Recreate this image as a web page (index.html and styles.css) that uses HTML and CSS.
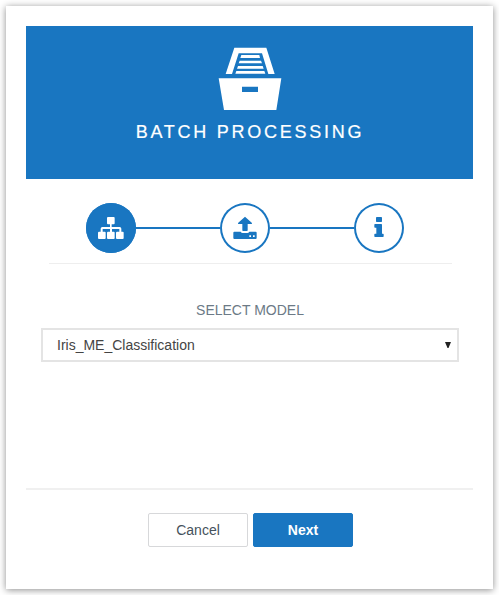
FILE: index.html
```html
<!DOCTYPE html>
<html lang="en">
<head>
<meta charset="utf-8">
<title>Batch Processing</title>
<link rel="stylesheet" href="styles.css">
</head>
<body>
<main class="dialog">
  <header class="banner">
    <svg class="banner-icon" viewBox="39 36 192 192" fill="#fff">
      <path d="M62 117 88 38H184L209 117H190L171 55H101L81 117Z"/>
      <path d="M109 60H163L165 69H106ZM104 77H168L171 85H101ZM99 93H173L176 101H96ZM94 108H178L181 116H91Z"/>
      <path fill-rule="evenodd" d="M41 130H229L214 225H57ZM111 155V171H159V155Z"/>
    </svg>
    <h1 class="title">BATCH PROCESSING</h1>
  </header>
  <nav class="steps">
    <div class="step active">
      <svg viewBox="33 24 150 150" fill="currentColor">
        <rect x="96" y="66" width="23" height="22" rx="3"/>
        <path d="M105 86h5v10h24q5 0 5 5v10h-6v-9h-22v9h-6v-9H83v9h-6v-10q0-5 5-5h23Z"/>
        <rect x="69" y="110" width="23" height="22" rx="3"/>
        <rect x="96" y="110" width="23" height="22" rx="3"/>
        <rect x="123" y="110" width="23" height="22" rx="3"/>
      </svg>
    </div>
    <div class="link"></div>
    <div class="step">
      <svg viewBox="45 24 150 150" fill="currentColor">
        <path d="M120 65 141 84Q142 87 139 87H128V106Q128 108 126 108H114Q112 108 112 106V87H101Q98 87 99 84Z"/>
        <path fill-rule="evenodd" d="M88 110H107Q109 114 113 114H127Q131 114 133 110H152Q155 110 155 113V129Q155 132 152 132H88Q85 132 85 129V113Q85 110 88 110ZM133 121V126H138V121ZM144 121V126H149V121Z"/>
      </svg>
    </div>
    <div class="link"></div>
    <div class="step">
      <svg viewBox="42 24 150 150" fill="currentColor">
        <rect x="108" y="66" width="18" height="15" rx="2"/>
        <path d="M105 87H124Q126 87 126 90V116H129Q131 116 131 118V124Q131 126 129 126H105Q103 126 103 124V118Q103 116 105 116H109V98H105Q103 98 103 96V89Q103 87 105 87Z"/>
      </svg>
    </div>
  </nav>
  <section class="form">
    <div class="label">SELECT MODEL</div>
    <div class="select">
      <span>Iris_ME_Classification</span>
      <svg class="arrow" viewBox="0 0 6 6"><path d="M0 0H6L3.5 6H2.5Z" fill="#222"/></svg>
    </div>
  </section>
  <footer class="actions">
    <button class="btn cancel">Cancel</button>
    <button class="btn next">Next</button>
  </footer>
</main>
</body>
</html>
```
FILE: styles.css
```css
* { box-sizing: border-box; }

body {
  margin: 0;
  padding: 6px;
  background: #fff;
  font-family: "Liberation Sans", Arial, sans-serif;
  font-size: 14px;
}

.dialog {
  display: flex;
  flex-direction: column;
  width: 487px;
  height: 583px;
  padding: 20px;
  background: #fff;
  box-shadow: 0 1px 7px rgba(0, 0, 0, 0.45);
}

.banner {
  display: flex;
  flex-direction: column;
  align-items: center;
  height: 153px;
  padding-top: 21px;
  background: #1976c1;
  color: #fff;
}

.banner-icon { width: 64px; height: 64px; }

.title {
  margin: 9px 0 0;
  padding-left: 1px;
  font-size: 18px;
  font-weight: 400;
  line-height: 24px;
  letter-spacing: 2.75px;
  -webkit-text-stroke: 0.2px #fff;
}

.steps {
  display: flex;
  align-items: center;
  height: 85px;
  margin: 0 21px 0 23px;
  padding: 24px 48px 10px 37px;
  border-bottom: 1px solid #eee;
}

.step {
  flex: none;
  width: 50px;
  height: 50px;
  border-radius: 50%;
  background: #fff;
  box-shadow: inset 0 0 0 2px #1976c1;
  color: #1976c1;
}

.step.active { background: #1976c1; color: #fff; }
.step svg { display: block; width: 50px; height: 50px; }
.link { flex: 1; height: 2px; background: #1976c1; }

.form {
  height: 224px;
  padding: 36px 14px 0 15px;
}

.label {
  height: 28px;
  line-height: 20px;
  color: #6c7a86;
  text-align: center;
}

.select {
  display: flex;
  align-items: center;
  justify-content: space-between;
  height: 34px;
  padding: 0 6px 0 14px;
  border: 2px solid #e4e4e4;
  color: #444;
}

.arrow { width: 6px; height: 6px; }

.actions {
  display: flex;
  justify-content: center;
  gap: 5px;
  padding: 23px 0 0 2px;
  border-top: 2px solid #f0f0f0;
}

.btn {
  width: 100px;
  height: 34px;
  padding: 0;
  border: 1px solid #d7d8da;
  border-radius: 2px;
  background: #fff;
  color: #46525c;
  font: 14px "Liberation Sans", Arial, sans-serif;
}

.btn.next {
  border-color: #1976c1;
  background: #1976c1;
  color: #fff;
  font-weight: 700;
}
```
